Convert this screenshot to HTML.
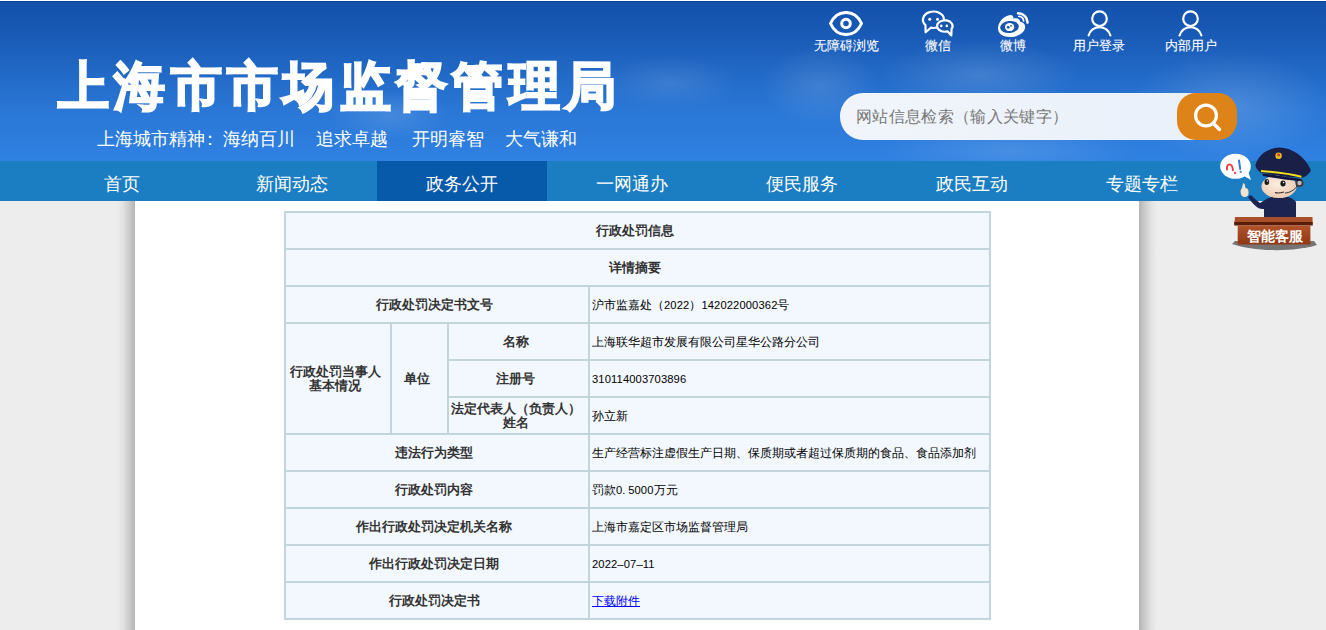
<!DOCTYPE html>
<html><head><meta charset="utf-8">
<style>
*{margin:0;padding:0;box-sizing:border-box}
html,body{width:1326px;height:630px;overflow:hidden;background:#ededed;font-family:"Liberation Sans",sans-serif}
#hdr{position:absolute;left:0;top:0;width:1326px;height:161px;background:linear-gradient(#1350aa 0px,#1a5cb8 40px,#2a77d6 110px,#2f81e2 161px);overflow:hidden}
#topline{position:absolute;left:0;top:0;width:1326px;height:1px;background:#fff}
#topline2{position:absolute;left:0;top:1px;width:1326px;height:1px;background:#0a43a0}
.cloud{position:absolute;border-radius:50%;background:radial-gradient(closest-side,rgba(255,255,255,.35),rgba(255,255,255,0))}
#title{position:absolute;left:58px;top:51px;color:#fff;font-size:54px;font-weight:bold;-webkit-text-stroke:2.2px #fff;white-space:nowrap;letter-spacing:5.3px;line-height:72px;transform:scale(.95,.97);transform-origin:0 0}
.slg{position:absolute;left:97px;top:125px;color:#fff;font-size:18px;white-space:nowrap;line-height:28px}
.ti{position:absolute;top:8px;color:#fff;font-size:13px;text-align:center;white-space:nowrap}
.tt{position:absolute;top:36.5px;color:#fff;font-size:13.4px;line-height:18px;-webkit-text-stroke:.1px #fff;text-align:center;white-space:nowrap}
#search{position:absolute;left:840px;top:93px;width:397px;height:47px;border-radius:23px;background:linear-gradient(90deg,#f1f5fb,#e9f0fa)}
#search span{position:absolute;left:16px;top:13px;font-size:16px;color:#777;letter-spacing:.35px;white-space:nowrap;line-height:22px}
#sbtn{position:absolute;left:1177px;top:93px;width:60px;height:47px;border-radius:19px;background:#de8318}
#nav{position:absolute;left:0;top:161px;width:1326px;height:40px;background:#1b7ec2}
.ni{position:absolute;top:0;width:170px;height:40px;line-height:46px;text-align:center;color:#fff;font-size:18px}
.ni.on{background:#0759a9}
#panel{position:absolute;left:135px;top:201px;width:1004px;height:429px;background:#fff}
#shl{position:absolute;left:117px;top:201px;width:18px;height:429px;background:linear-gradient(90deg,rgba(0,0,0,0),rgba(0,0,0,.05) 35%,rgba(0,0,0,.15) 70%,rgba(0,0,0,.24))}
#shr{position:absolute;left:1139px;top:201px;width:18px;height:429px;background:linear-gradient(270deg,rgba(0,0,0,0),rgba(0,0,0,.05) 35%,rgba(0,0,0,.15) 70%,rgba(0,0,0,.24))}
table{position:absolute;left:284px;top:211px;width:707px;border-collapse:separate;border-spacing:2px;background:#c2d5dd}
td{background:#f3f8fe;height:35px;font-size:12px;color:#000;padding:0 2px;line-height:14px}
td.l{font-weight:bold;text-align:center;font-size:13px;color:#333;padding:0 6px 0 0}
.d{font-size:11.2px;letter-spacing:0.12px}
a{color:#00f;text-decoration:underline}
</style></head><body>
<div id="hdr">
  <div class="cloud" style="left:600px;top:55px;width:140px;height:55px;opacity:.3"></div>
  <div class="cloud" style="left:760px;top:45px;width:120px;height:80px;opacity:.35"></div>
  <div class="cloud" style="left:880px;top:40px;width:200px;height:70px;opacity:.4"></div>
  <div class="cloud" style="left:1130px;top:50px;width:200px;height:110px;opacity:.45"></div>
  <div class="cloud" style="left:330px;top:90px;width:120px;height:50px;opacity:.35"></div>
  <div class="cloud" style="left:880px;top:125px;width:260px;height:50px;opacity:.35"></div>
  <div id="title">上海市市场监督管理局</div>
  <div class="slg" style="left:97px">上海城市精神<span style="position:relative;left:-4px">：</span>海纳百川</div><div class="slg" style="left:316px">追求卓越</div><div class="slg" style="left:412px">开明睿智</div><div class="slg" style="left:505px">大气谦和</div>

  <svg style="position:absolute;left:829px;top:11px" width="34" height="25" viewBox="0 0 34 25"><path d="M1.5 12.5 C8 -2.2 26 -2.2 32.5 12.5 C26 27.2 8 27.2 1.5 12.5 Z" fill="none" stroke="#fff" stroke-width="3" stroke-linejoin="round"/><circle cx="17" cy="12.5" r="4.3" fill="none" stroke="#fff" stroke-width="3"/></svg>
  <svg style="position:absolute;left:918px;top:8px" width="40" height="30" viewBox="0 0 40 30"><path d="M7.46 17.07 A10.5 8.2 0 1 1 12.8 19.7 L7.6 24.3 Z" fill="none" stroke="#fff" stroke-width="2.2" stroke-linejoin="round"/><circle cx="11.7" cy="11.2" r="1.5" fill="#fff"/><circle cx="19.5" cy="11.2" r="1.5" fill="#fff"/><path d="M29.5 23.36 A7.75 5.7 0 1 1 33.56 20.85 L33.3 27.4 Z" fill="#1855ad" stroke="#fff" stroke-width="2.2" stroke-linejoin="round"/><circle cx="23.3" cy="17.9" r="1.3" fill="#fff"/><circle cx="28.8" cy="17.9" r="1.3" fill="#fff"/></svg>
  <svg style="position:absolute;left:993px;top:6px" width="40" height="32" viewBox="0 0 40 32"><path d="M5 22.5 C5 16 11 9.5 17.5 9 C19.8 9 20.8 10.5 20.2 12.5 C23.5 12 27 12.5 27.2 15.8 C31 16.5 32.5 19 32 22 C31 27.5 24 31 17 31 C10 31 5 27.5 5 22.5 Z" fill="#fff"/><ellipse cx="16.5" cy="21" rx="9.4" ry="6" transform="rotate(-6 16.5 21)" fill="#1855ad"/><ellipse cx="16.6" cy="21.1" rx="4.7" ry="4" fill="#fff"/><circle cx="15.2" cy="21.3" r="1.4" fill="#1855ad"/><circle cx="18" cy="19.8" r="0.9" fill="#1855ad"/><path d="M25 7.2 A9.6 9.6 0 0 1 34.6 16.6" fill="none" stroke="#fff" stroke-width="2.5" stroke-linecap="round"/><path d="M25.9 10.4 A4.6 4.6 0 0 1 30.6 15" fill="none" stroke="#fff" stroke-width="1.7" stroke-linecap="round"/></svg>
  <svg style="position:absolute;left:1083px;top:6px" width="34" height="32" viewBox="0 0 34 32"><circle cx="16.5" cy="12.7" r="7.3" fill="none" stroke="#fff" stroke-width="2.2"/><path d="M5.6 29.5 A11.3 11.3 0 0 1 27.4 29.5" fill="none" stroke="#fff" stroke-width="2.2" stroke-linecap="round"/></svg>
  <svg style="position:absolute;left:1174px;top:6px" width="34" height="32" viewBox="0 0 34 32"><circle cx="16.5" cy="12.7" r="7.3" fill="none" stroke="#fff" stroke-width="2.2"/><path d="M5.6 29.5 A11.3 11.3 0 0 1 27.4 29.5" fill="none" stroke="#fff" stroke-width="2.2" stroke-linecap="round"/></svg>
  <div class="tt" style="left:813px;width:66px">无障碍浏览</div>
  <div class="tt" style="left:918px;width:40px">微信</div>
  <div class="tt" style="left:993px;width:40px">微博</div>
  <div class="tt" style="left:1069px;width:60px">用户登录</div>
  <div class="tt" style="left:1161px;width:60px">内部用户</div>
  <div id="search"><span>网站信息检索（输入关键字）</span></div>
  <div id="sbtn"><svg width="60" height="47" viewBox="0 0 60 47"><circle cx="29" cy="22.5" r="10.4" fill="none" stroke="#fff" stroke-width="3.2"/><line x1="37" y1="31" x2="42.5" y2="36.5" stroke="#fff" stroke-width="3.4" stroke-linecap="round"/></svg></div>
</div>
<div id="topline"></div><div id="topline2"></div>
<div id="nav">
  <div class="ni" style="left:37px">首页</div>
  <div class="ni" style="left:207px">新闻动态</div>
  <div class="ni on" style="left:377px">政务公开</div>
  <div class="ni" style="left:547px">一网通办</div>
  <div class="ni" style="left:717px">便民服务</div>
  <div class="ni" style="left:887px">政民互动</div>
  <div class="ni" style="left:1057px">专题专栏</div>
</div>
<div id="shl"></div><div id="shr"></div>
<div id="panel"></div>
<table>
<tr><td class="l" colspan="4">行政处罚信息</td></tr>
<tr><td class="l" colspan="4">详情摘要</td></tr>
<tr><td class="l" colspan="3" style="width:302px">行政处罚决定书文号</td><td>沪市监嘉处（<span class="d">2022</span>）<span class="d">142022000362</span>号</td></tr>
<tr><td class="l" rowspan="3" style="width:104px">行政处罚当事人<br>基本情况</td><td class="l" rowspan="3" style="width:55px">单位</td><td class="l" style="width:139px">名称</td><td>上海联华超市发展有限公司星华公路分公司</td></tr>
<tr><td class="l">注册号</td><td><span class="d">310114003703896</span></td></tr>
<tr><td class="l">法定代表人（负责人）<br>姓名</td><td>孙立新</td></tr>
<tr><td class="l" colspan="3">违法行为类型</td><td>生产经营标注虚假生产日期、保质期或者超过保质期的食品、食品添加剂</td></tr>
<tr><td class="l" colspan="3">行政处罚内容</td><td>罚款<span class="d">0<span style="letter-spacing:2.7px">.</span>5000</span>万元</td></tr>
<tr><td class="l" colspan="3">作出行政处罚决定机关名称</td><td>上海市嘉定区市场监督管理局</td></tr>
<tr><td class="l" colspan="3">作出行政处罚决定日期</td><td><span class="d">2022–07–11</span></td></tr>
<tr><td class="l" colspan="3">行政处罚决定书</td><td><a>下载附件</a></td></tr>
</table>

<svg id="mascot" style="position:absolute;left:1215px;top:140px" width="111" height="115" viewBox="0 0 111 115">
 <defs>
  <linearGradient id="dk" x1="0" y1="0" x2="0" y2="1"><stop offset="0" stop-color="#b3532a"/><stop offset="1" stop-color="#8e3815"/></linearGradient>
  <radialGradient id="sk" cx=".45" cy=".4" r=".6"><stop offset="0" stop-color="#fbeee2"/><stop offset="1" stop-color="#eccab2"/></radialGradient>
 </defs>
 <path d="M17 104 C40 112 80 112 102 105 L99 101 L20 101 Z" fill="#5f5f5f" opacity=".85"/>
 <path d="M29 36 L36 40 L33 31 Z" fill="#fff"/>
 <ellipse cx="20.5" cy="26.3" rx="15.3" ry="12.5" fill="#fff"/>
 <path d="M12 29.5 C11.4 26.5 12.8 24.4 14.6 24.4 C16.6 24.5 17.6 26.8 18 30.2" fill="none" stroke="#e83c3c" stroke-width="1.9" stroke-linecap="round"/>
 <circle cx="20" cy="32.9" r="1.15" fill="#e83c3c"/>
 <path d="M24 20.5 L25.2 29" stroke="#3a7ae0" stroke-width="2" stroke-linecap="round"/>
 <circle cx="25.7" cy="31.8" r="1.15" fill="#3a7ae0"/>
 <path d="M33 57 C38 64 43 70 49 69 L49 77 L81 77 L81 62 C78 58 72 56 66 56 C60 56 54 57 50 60 L45 63 C41 60 38 57 36 55 Z" fill="#1b2350"/>
 <path d="M27 56 C25 53 25 50 27 48 L28 43.5 C29 43 30 44 30 46 L30.5 48 C33 48 34 51 33.5 54 C33 57 29 58 27 56 Z" fill="#f6e3cf"/>
 <ellipse cx="64" cy="46.5" rx="17.5" ry="11.5" fill="url(#sk)"/>
 <ellipse cx="51.8" cy="42" rx="2.3" ry="3" fill="#1a1a1a"/>
 <ellipse cx="68" cy="43.5" rx="2.6" ry="3" fill="#1a1a1a"/>
 <circle cx="52.4" cy="41" r=".8" fill="#fff"/><circle cx="68.6" cy="42.5" r=".8" fill="#fff"/>
 <path d="M60 52.5 C63 53.5 66 53 69 52" stroke="#3a2a2a" stroke-width="1.2" fill="none"/>
 <path d="M82 46 C80 50 74 53 70 53" stroke="#333" stroke-width="1" fill="none"/>
 <circle cx="84.5" cy="43" r="4" fill="#3a3a3a"/>
 <circle cx="84.5" cy="43" r="2.2" fill="#bbb"/>
 <path d="M40.7 24 C44 14 54 8 64 7.6 C76 7.5 90 16 96 30.5 C94 34 90 37 88 37.6 C76 38 58 35 45.5 32.4 C42 30 40 27 40.7 24 Z" fill="#1a1f48"/>
 <path d="M46 31 C60 32 76 34 86.4 36.7" fill="none" stroke="#f2df1a" stroke-width="2"/>
 <path d="M47 33.5 C60 35 76 37.5 87 39 L84 41 C72 40 58 38 48 36 Z" fill="#10143a"/>
 <circle cx="63.6" cy="15.7" r="3.2" fill="#e8c020"/>
 <circle cx="63.6" cy="14.8" r="1.6" fill="#e04020"/>
 <path d="M20 77 L97.5 77 L97.7 84.6 L19.2 84.6 Z" fill="#a9502a"/>
 <path d="M19.2 82 L97.7 82 L97.7 85.5 L19.2 85.5 Z" fill="#5a1c08"/>
 <path d="M22.7 85.5 L95.4 85.5 L95.4 104.5 L22.7 104.5 Z" fill="url(#dk)"/>
 <text x="59.5" y="100.5" text-anchor="middle" font-size="14" fill="#fff" font-family="Liberation Sans" font-weight="bold">智能客服</text>
</svg>
</body></html>
